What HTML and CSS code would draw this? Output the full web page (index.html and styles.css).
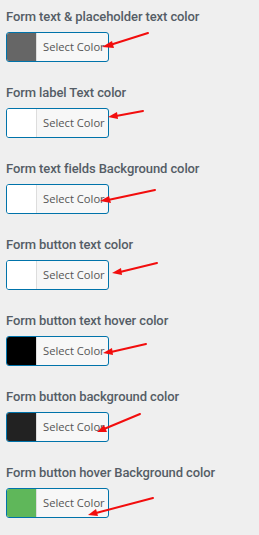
FILE: index.html
```html
<!DOCTYPE html>
<html lang="en">
<head>
<meta charset="utf-8">
<title>Color settings</title>
<link rel="stylesheet" href="styles.css">
</head>
<body>
<div class="panel">
 <!-- Color fields -->
 <div class="field">
  <h3>Form text &amp; placeholder text color</h3>
  <button type="button" class="picker"><span class="swatch sw-gray"></span><span class="label">Select Color</span></button>
 </div>
 <div class="field">
  <h3>Form label Text color</h3>
  <button type="button" class="picker"><span class="swatch sw-white"></span><span class="label">Select Color</span></button>
 </div>
 <div class="field">
  <h3>Form text fields Background color</h3>
  <button type="button" class="picker"><span class="swatch sw-white"></span><span class="label">Select Color</span></button>
 </div>
 <div class="field">
  <h3>Form button text color</h3>
  <button type="button" class="picker"><span class="swatch sw-white"></span><span class="label">Select Color</span></button>
 </div>
 <div class="field">
  <h3>Form button text hover color</h3>
  <button type="button" class="picker"><span class="swatch sw-black"></span><span class="label">Select Color</span></button>
 </div>
 <div class="field">
  <h3>Form button background color</h3>
  <button type="button" class="picker"><span class="swatch sw-dark"></span><span class="label">Select Color</span></button>
 </div>
 <div class="field">
  <h3>Form button hover Background color</h3>
  <button type="button" class="picker"><span class="swatch sw-green"></span><span class="label">Select Color</span></button>
 </div>

 <!-- Annotation arrows -->
 <svg class="arrows" width="259" height="535" viewBox="0 0 259 535">
  <g stroke="#f20d0d" stroke-width="2" stroke-linecap="round">
   <line x1="148" y1="33" x2="110" y2="45"/>
   <line x1="143" y1="111" x2="116" y2="116"/>
   <line x1="155" y1="190" x2="108" y2="200"/>
   <line x1="157" y1="263" x2="120" y2="272"/>
   <line x1="146" y1="344" x2="111" y2="352"/>
   <line x1="140" y1="414" x2="104" y2="429"/>
   <line x1="153" y1="498" x2="96" y2="513"/>
  </g>
  <g fill="#f20d0d">
   <polygon points="102,47 112,41 114,48"/>
   <polygon points="108,117 117,112 118,119"/>
   <polygon points="100,201 109,196 111,203"/>
   <polygon points="112,273 121,268 122,275"/>
   <polygon points="103,353 112,348 113,355"/>
   <polygon points="97,432 104,425 107,432"/>
   <polygon points="88,515 96,509 98,516"/>
  </g>
 </svg>
</div>
</body>
</html>
```

FILE: styles.css
```css
/* ---------- Base ---------- */
*{box-sizing:border-box}
body{margin:0;background:#efefef;font-family:"Open Sans","Noto Sans",sans-serif;color:#555d66}
.panel{position:relative;padding:7px 0 0 6px;min-height:535px}

/* ---------- Field ---------- */
.field{height:76px}
.field h3{margin:0;font-family:Roboto,"Open Sans",sans-serif;font-size:13px;line-height:20px;font-weight:500;letter-spacing:-.1px;color:#555d66;white-space:nowrap}
.picker{display:flex;margin-top:5px;padding:0;width:103px;height:30px;background:#f7f7f7;border:1px solid #0073aa;border-radius:3px;overflow:hidden;cursor:pointer;font-family:inherit}
.swatch{width:30px;height:100%;border-right:1px solid #ddd}
.label{flex:1;padding-left:6px;font-size:11.2px;line-height:28px;color:#555;text-align:left;white-space:nowrap}

.sw-gray{background:#666}
.sw-white{background:#fff}
.sw-black{background:#000}
.sw-dark{background:#222}
.sw-green{background:#5fb75a}

/* ---------- Annotation ---------- */
.arrows{position:absolute;left:0;top:0;pointer-events:none}
```
